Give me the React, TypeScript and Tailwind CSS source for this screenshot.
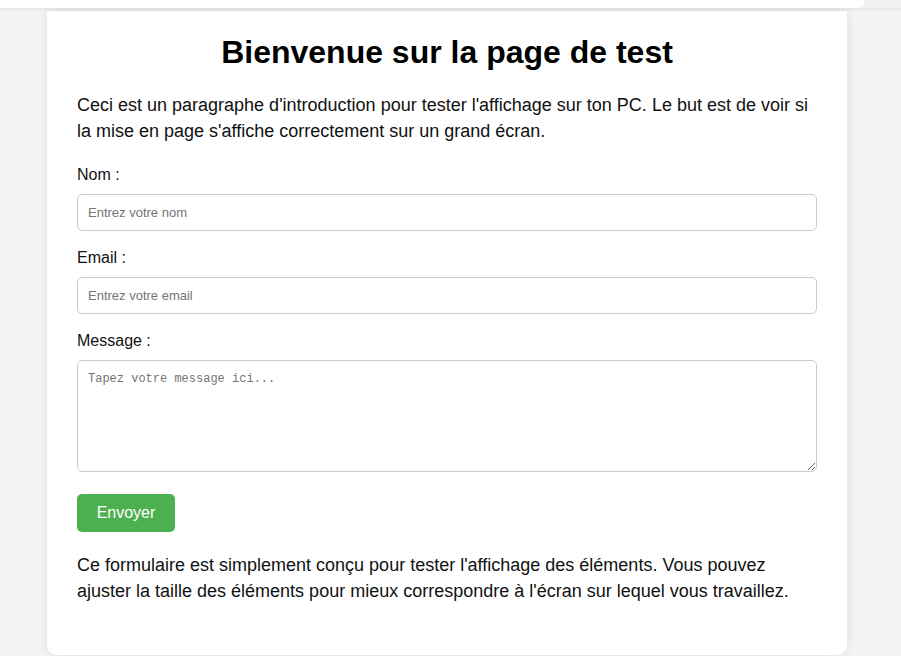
export default function App() {
  return (
    <div className="min-h-[656px] bg-[#f4f4f4] font-['Liberation_Sans',Arial,sans-serif] text-[#111] overflow-hidden h-[656px]">
      {/* cropped browser bar */}
      <div className="flex h-[11px] border-b-[3px] border-[#ebebeb] bg-[#f0f0f0]">
        <div className="w-[865px] h-[8px] bg-white rounded-br-[8px]" />
      </div>

      <div className="w-[800px] ml-[47px] bg-white rounded-b-[10px] shadow-[0_0_12px_rgba(0,0,0,0.1)] px-[30px] pt-[23px] pb-[51px]">
        <h1 className="text-center text-[32px] font-bold leading-[37px] text-black">
          Bienvenue sur la page de test
        </h1>
        <p className="mt-[21px] text-[18px] leading-[26px]">
          Ceci est un paragraphe d'introduction pour tester l'affichage sur ton PC. Le but est de voir si la mise en page s'affiche correctement sur un grand écran.
        </p>

        <form className="mt-[22px] flex flex-col" onSubmit={(e) => e.preventDefault()}>
          <label className="text-[16px] leading-[18px]">Nom :</label>
          <input
            type="text"
            placeholder="Entrez votre nom"
            className="mt-[10px] h-[37px] w-full rounded-[5px] border border-[#ccc] px-[10px] text-[13px] placeholder:text-[#757575] outline-none"
          />

          <label className="mt-[18px] text-[16px] leading-[18px]">Email :</label>
          <input
            type="email"
            placeholder="Entrez votre email"
            className="mt-[10px] h-[37px] w-full rounded-[5px] border border-[#ccc] px-[10px] text-[13px] placeholder:text-[#757575] outline-none"
          />

          <label className="mt-[18px] text-[16px] leading-[18px]">Message :</label>
          <textarea
            placeholder="Tapez votre message ici..."
            className="mt-[10px] h-[112px] w-full rounded-[5px] border border-[#ccc] px-[10px] py-[10px] font-['Liberation_Mono',monospace] text-[12px] leading-[16px] placeholder:text-[#757575] outline-none resize-y"
          />

          <button
            type="submit"
            className="mt-[22px] w-[98px] h-[38px] rounded-[5px] bg-[#4caf50] text-white text-[16px]"
          >
            Envoyer
          </button>
        </form>

        <p className="mt-[20px] text-[18px] leading-[26px]">
          Ce formulaire est simplement conçu pour tester l'affichage des éléments. Vous pouvez ajuster la taille des éléments pour mieux correspondre à l'écran sur lequel vous travaillez.
        </p>
      </div>
    </div>
  );
}
